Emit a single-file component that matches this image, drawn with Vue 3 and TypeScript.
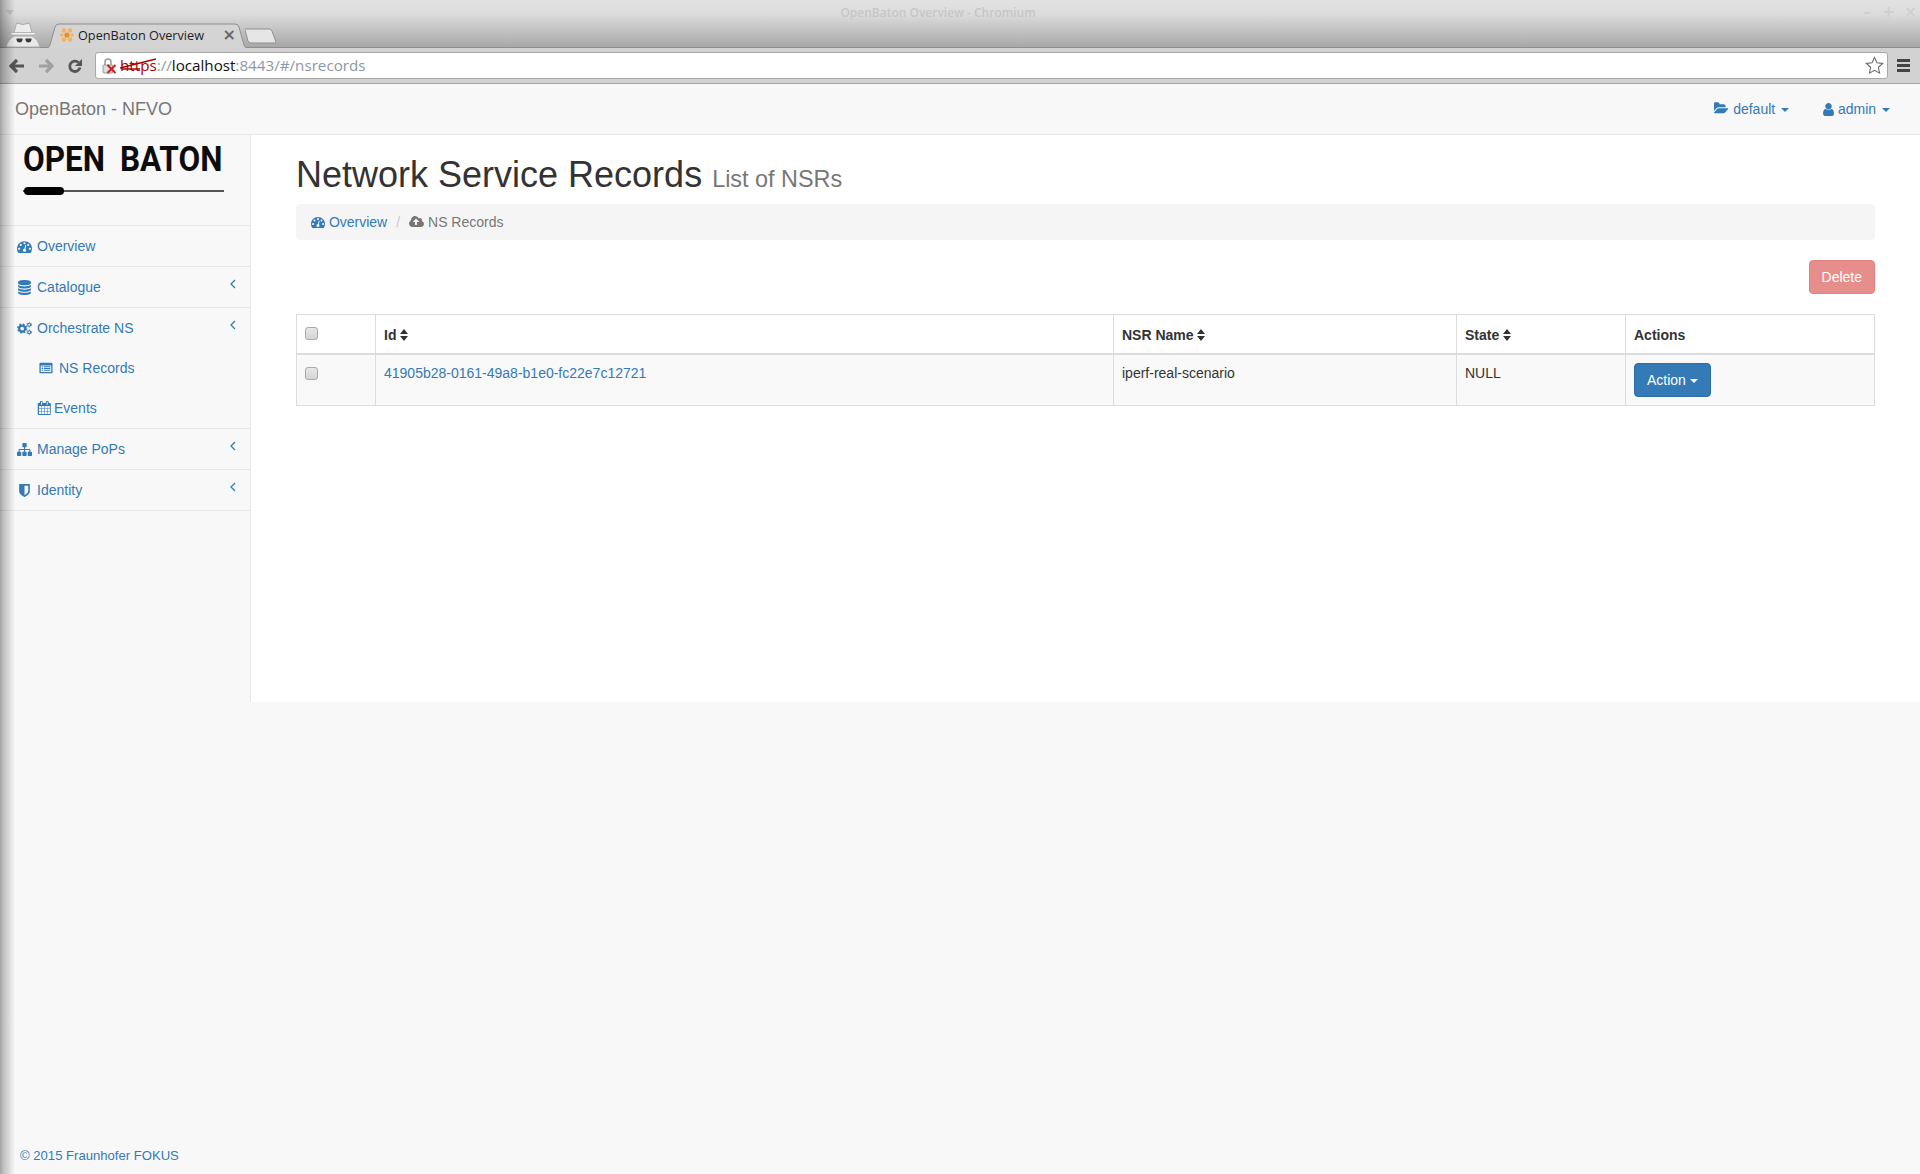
<script setup lang="ts">
interface Icon {
  box: string
  d: string
}

interface SubItem {
  label: string
  icon: 'list' | 'calendar'
}

interface NavItem {
  label: string
  icon: 'gauge' | 'database' | 'cogs' | 'sitemap' | 'shield'
  arrow: boolean
  children?: SubItem[]
}

const icons: Record<string, Icon> = {
  gauge: {
    box: '0 0 1792 1792',
    d: 'M384 1152q0-53-37.5-90.5t-90.5-37.5-90.5 37.5-37.5 90.5 37.5 90.5 90.5 37.5 90.5-37.5 37.5-90.5zm192-448q0-53-37.5-90.5t-90.5-37.5-90.5 37.5-37.5 90.5 37.5 90.5 90.5 37.5 90.5-37.5 37.5-90.5zm428 481l101-382q6-26-7.5-48.5t-38.5-29.5-48 6.5-30 39.5l-101 382q-60 5-107 43.5t-63 98.5q-20 77 20 146t117 89 146-20 89-117q16-60-6-117t-72-91zm660-33q0-53-37.5-90.5t-90.5-37.5-90.5 37.5-37.5 90.5 37.5 90.5 90.5 37.5 90.5-37.5 37.5-90.5zm-640-640q0-53-37.5-90.5t-90.5-37.5-90.5 37.5-37.5 90.5 37.5 90.5 90.5 37.5 90.5-37.5 37.5-90.5zm448 192q0-53-37.5-90.5t-90.5-37.5-90.5 37.5-37.5 90.5 37.5 90.5 90.5 37.5 90.5-37.5 37.5-90.5zm320 448q0 261-141 483-19 29-54 29h-1402q-35 0-54-29-141-221-141-483 0-182 71-348t191-286 286-191 348-71 348 71 286 191 191 286 71 348z'
  },
  database: {
    box: '0 0 1792 1792',
    d: 'M896 768q237 0 443-43t325-127v170q0 69-103 128t-280 93.5-385 34.5-385-34.5-280-93.5-103-128v-170q119 84 325 127t443 43zm0 768q237 0 443-43t325-127v170q0 69-103 128t-280 93.5-385 34.5-385-34.5-280-93.5-103-128v-170q119 84 325 127t443 43zm0-384q237 0 443-43t325-127v170q0 69-103 128t-280 93.5-385 34.5-385-34.5-280-93.5-103-128v-170q119 84 325 127t443 43zm0-1152q208 0 385 34.5t280 93.5 103 128v128q0 69-103 128t-280 93.5-385 34.5-385-34.5-280-93.5-103-128v-128q0-69 103-128t280-93.5 385-34.5z'
  },
  sitemap: {
    box: '0 0 1792 1792',
    d: 'M1792 1248v320q0 40-28 68t-68 28h-320q-40 0-68-28t-28-68v-320q0-40 28-68t68-28h96v-192h-512v192h96q40 0 68 28t28 68v320q0 40-28 68t-68 28h-320q-40 0-68-28t-28-68v-320q0-40 28-68t68-28h96v-192h-512v192h96q40 0 68 28t28 68v320q0 40-28 68t-68 28h-320q-40 0-68-28t-28-68v-320q0-40 28-68t68-28h96v-192q0-52 38-90t90-38h512v-192h-96q-40 0-68-28t-28-68v-320q0-40 28-68t68-28h320q40 0 68 28t28 68v320q0 40-28 68t-68 28h-96v192h512q52 0 90 38t38 90v192h96q40 0 68 28t28 68z'
  },
  shield: {
    box: '0 0 1792 1792',
    d: 'M1344 960v-640h-448v1137q119-63 213-137 235-184 235-360zm192-768v768q0 86-33.5 170.5t-83 150-118 127.5-126.5 103-121 77.5-89.5 49.5-42.5 20q-12 6-26 6t-26-6q-16-7-42.5-20t-89.5-49.5-121-77.5-126.5-103-118-127.5-83-150-33.5-170.5v-768q0-26 19-45t45-19h1152q26 0 45 19t19 45z'
  },
  calendar: {
    box: '0 0 1664 1792',
    d: 'M192 1664h288v-288h-288v288zm352 0h320v-288h-320v288zm-352-352h288v-320h-288v320zm352 0h320v-320h-320v320zm-352-384h288v-288h-288v288zm736 736h320v-288h-320v288zm-384-736h320v-288h-320v288zm768 736h288v-288h-288v288zm-384-352h320v-320h-320v320zm-352-864v-288q0-13-9.5-22.5t-22.5-9.5h-64q-13 0-22.5 9.5t-9.5 22.5v288q0 13 9.5 22.5t22.5 9.5h64q13 0 22.5-9.5t9.5-22.5zm736 864h288v-320h-288v320zm-384-384h320v-288h-320v288zm352 0h288v-288h-288v288zm32-480v-288q0-13-9.5-22.5t-22.5-9.5h-64q-13 0-22.5 9.5t-9.5 22.5v288q0 13 9.5 22.5t22.5 9.5h64q13 0 22.5-9.5t9.5-22.5zm384-64v1280q0 52-38 90t-90 38h-1408q-52 0-90-38t-38-90v-1280q0-52 38-90t90-38h128v-96q0-66 47-113t113-47h64q66 0 113 47t47 113v96h384v-96q0-66 47-113t113-47h64q66 0 113 47t47 113v96h128q52 0 90 38t38 90z'
  },
  cloud: {
    box: '0 0 1920 1792',
    d: 'M1280 864q0-14-9-23l-352-352q-9-9-23-9t-23 9l-351 351q-10 12-10 24 0 14 9 23t23 9h224v352q0 13 9.5 22.5t22.5 9.5h192q13 0 22.5-9.5t9.5-22.5v-352h224q13 0 22.5-9.5t9.5-22.5zm640 288q0 159-112.5 271.5t-271.5 112.5h-1088q-185 0-316.5-131.5t-131.5-316.5q0-130 70-240t188-165q-2-30-2-43 0-212 150-362t362-150q156 0 285.5 87t188.5 231q71-62 166-62 106 0 181 75t75 181q0 76-41 138 130 31 213.5 135.5t83.5 238.5z'
  },
  folder: {
    box: '0 100 1920 1792',
    d: 'M1815 952q0 31-31 66l-336 396q-43 51-120.5 86.5t-143.5 35.5h-1088q-34 0-60.5-13t-26.5-43q0-31 31-66l336-396q43-51 120.5-86.5t143.5-35.5h1088q34 0 60.5 13t26.5 43zm-343-344v160h-832q-94 0-197 47.5t-164 119.5l-337 396-5 6q0-4-.5-12.5t-.5-12.5v-960q0-92 66-158t158-66h320q92 0 158 66t66 158v32h544q92 0 158 66t66 158z'
  },
  user: {
    box: '256 128 1280 1536',
    d: 'M1536 1399q0 109-62.5 187t-150.5 78h-854q-88 0-150.5-78t-62.5-187q0-85 8.5-160.5t31.5-152 58.5-131 94-89 134.5-34.5q131 128 313 128t313-128q76 0 134.5 34.5t94 89 58.5 131 31.5 152 8.5 160.5zm-256-887q0 159-112.5 271.5t-271.5 112.5-271.5-112.5-112.5-271.5 112.5-271.5 271.5-112.5 271.5 112.5 112.5 271.5z'
  },
  list: {
    box: '0 0 16 14',
    d: 'M1.5 1h13q1 0 1 1v10q0 1-1 1h-13q-1 0-1-1v-10q0-1 1-1zM2 4v7.500h12v-7.500zM3 5h1.500v1h-1.500zM5.500 5h7.500v1h-7.500zM3 7h1.500v1h-1.500zM5.500 7h7.500v1h-7.500zM3 9h1.500v1h-1.500zM5.500 9h7.500v1h-7.500z'
  }
}

const nav: NavItem[] = [
  { label: 'Overview', icon: 'gauge', arrow: false },
  { label: 'Catalogue', icon: 'database', arrow: true },
  {
    label: 'Orchestrate NS',
    icon: 'cogs',
    arrow: true,
    children: [
      { label: 'NS Records', icon: 'list' },
      { label: 'Events', icon: 'calendar' }
    ]
  },
  { label: 'Manage PoPs', icon: 'sitemap', arrow: true },
  { label: 'Identity', icon: 'shield', arrow: true }
]

const columns = ['Id', 'NSR Name', 'State']
</script>

<template>
  <div class="page">
    <div class="edge-shadow"></div>

    <header class="browser">
      <div class="titlebar">
        <span class="win-menu"></span>
        <span class="win-title">OpenBaton Overview - Chromium</span>
        <div class="win-controls">
          <span>–</span>
          <span>+</span>
          <span>×</span>
        </div>
      </div>
      <div class="tabstrip">
        <svg class="incognito" viewBox="0 0 36 26">
          <path d="M11.500 1l6.500 1.500 6.500-1.500 2.500 9.500h-18z" fill="#ececec" stroke="#aaa" />
          <path d="M4 10.500h28l-3 2.500h-22z" fill="#f2f2f2" stroke="#aaa" stroke-width=".7" />
          <path d="M9 14h18q6 3 8 11h-34q2-8 8-11z" fill="#e8e8e8" stroke="#aaa" />
          <path d="M11.500 16.500h6v1.500q-.5 2.500-3 2.500t-3-2.500zM20.500 16.500h6v1.500q-.5 2.500-3 2.500t-3-2.500z" fill="#3c3c3c" />
        </svg>
        <div class="tab">
          <svg class="tab-shape" viewBox="0 0 203 25" preserveAspectRatio="none">
            <path d="M0 25h2q2 0 3-3l5-18q1-3 4-3h176q3 0 4 3l5 18q1 3 3 3h1" fill="#d4d4d4" stroke="#8e8e8e" />
          </svg>
          <svg class="favicon" viewBox="0 0 14 14">
            <g fill="#f5b061">
              <circle cx="4" cy="2.500" r="2.200" />
              <circle cx="10" cy="2.500" r="2.200" />
              <circle cx="1.800" cy="7" r="1.800" />
              <circle cx="12.200" cy="7" r="1.800" />
              <circle cx="4" cy="11.500" r="2.200" />
              <circle cx="10" cy="11.500" r="2.200" />
            </g>
            <circle cx="7" cy="7" r="2.600" fill="#f08c1a" />
          </svg>
          <span class="tab-title">OpenBaton Overview</span>
          <span class="tab-close">×</span>
        </div>
        <svg class="newtab" viewBox="0 0 32 16">
          <path d="M1 1h23q2 0 3 2l4 11q.5 1-1 1h-24q-2 0-3-2l-3-11q0-1 1-1z" fill="#e6e6e6" stroke="#8e8e8e" />
        </svg>
      </div>
      <div class="toolbar">
        <svg class="nav-btn" viewBox="0 0 16 16">
          <path d="M8 2l-6 6 6 6M2.500 8h12.500" fill="none" stroke="#555" stroke-width="3.200" />
        </svg>
        <svg class="nav-btn" viewBox="0 0 16 16">
          <path d="M8 2l6 6-6 6M13.500 8h-12.500" fill="none" stroke="#a0a0a0" stroke-width="3.200" />
        </svg>
        <svg class="nav-btn" viewBox="0 0 16 16">
          <path d="M13 9.500a5.200 5.200 0 1 1-1.500-5" fill="none" stroke="#555" stroke-width="2.800" />
          <path d="M15 1v7h-7z" fill="#555" />
        </svg>
        <div class="omnibox">
          <svg class="lock" viewBox="0 0 16 16">
            <path d="M4 7v-3q0-3 3-3t3 3v3" fill="none" stroke="#999" stroke-width="1.500" />
            <rect x="2" y="7" width="10" height="8" rx="1" fill="#ddd" stroke="#999" />
            <path d="M6.500 7l8 8M14.500 7l-8 8" stroke="#c8201c" stroke-width="2" />
          </svg>
          <span class="url">
            <span class="url-scheme">https<svg class="url-strike" viewBox="0 0 36 14"><path d="M0 11l36-9M2 12h18" stroke="#a80000" stroke-width="1.300" fill="none" /></svg></span><span class="url-muted">://</span><span class="url-host">localhost</span><span class="url-muted">:8443/#/nsrecords</span>
          </span>
          <svg class="star" viewBox="0 0 20 20">
            <path d="M10 1.500l2.600 5.600 6 .7-4.500 4.100 1.200 6.100-5.300-3-5.300 3 1.200-6.100-4.500-4.100 6-.7z" fill="#fff" stroke="#666" stroke-width="1.100" />
          </svg>
        </div>
        <div class="hamburger">
          <span></span>
          <span></span>
          <span></span>
        </div>
      </div>
    </header>

    <nav class="navbar">
      <a class="brand">OpenBaton - NFVO</a>
      <div class="nav-right">
        <a class="nav-link">
          <svg class="icon folder" :viewBox="icons.folder.box"><path :d="icons.folder.d" /></svg>
          default
          <span class="caret"></span>
        </a>
        <a class="nav-link">
          <svg class="icon user" :viewBox="icons.user.box"><path :d="icons.user.d" /></svg>
          admin
          <span class="caret"></span>
        </a>
      </div>
    </nav>

    <div class="workspace">
      <aside class="sidebar">
        <div class="logo">
          <div class="logo-text">OPEN BATON</div>
          <div class="logo-line"><span></span></div>
        </div>
        <ul class="menu">
          <li v-for="item in nav" :key="item.label" class="menu-item">
            <a class="menu-link">
              <svg v-if="item.icon === 'cogs'" class="menu-icon" viewBox="0 0 16 14">
                <g fill="none" stroke="#337ab7">
                  <circle cx="5.500" cy="7" r="3.200" stroke-width="2.400" />
                  <circle cx="5.500" cy="7" r="4.700" stroke-width="1.500" stroke-dasharray="2 1.700" />
                  <circle cx="13" cy="3" r="1.600" stroke-width="1.200" />
                  <circle cx="13" cy="3" r="2.500" stroke-width="1" stroke-dasharray="1.200 1.400" />
                  <circle cx="13" cy="11" r="1.600" stroke-width="1.200" />
                  <circle cx="13" cy="11" r="2.500" stroke-width="1" stroke-dasharray="1.200 1.400" />
                </g>
              </svg>
              <svg v-else class="menu-icon" :viewBox="icons[item.icon].box"><path :d="icons[item.icon].d" /></svg>
              <span>{{ item.label }}</span>
              <svg v-if="item.arrow" class="chevron" viewBox="0 0 6 10">
                <path d="M5 1l-4 4 4 4" fill="none" stroke="#337ab7" stroke-width="1.300" />
              </svg>
            </a>
            <ul v-if="item.children" class="submenu">
              <li v-for="child in item.children" :key="child.label">
                <a class="sub-link" :class="`sub-${child.icon}`">
                  <svg class="sub-icon" :viewBox="icons[child.icon].box"><path :d="icons[child.icon].d" /></svg>
                  <span>{{ child.label }}</span>
                </a>
              </li>
            </ul>
          </li>
        </ul>
      </aside>

      <main class="content">
        <h1 class="title">Network Service Records <small>List of NSRs</small></h1>
        <ol class="breadcrumb">
          <li>
            <a>
              <svg class="icon" :viewBox="icons.gauge.box"><path :d="icons.gauge.d" /></svg>
              Overview
            </a>
          </li>
          <li class="sep">/</li>
          <li class="crumb-active">
            <svg class="icon cloud" :viewBox="icons.cloud.box"><path :d="icons.cloud.d" /></svg>
            NS Records
          </li>
        </ol>

        <div class="actions">
          <button class="btn btn-danger" disabled>Delete</button>
        </div>

        <table class="records">
          <colgroup>
            <col style="width: 79px" />
            <col style="width: 738px" />
            <col style="width: 343px" />
            <col style="width: 169px" />
            <col />
          </colgroup>
          <thead>
            <tr>
              <th class="check-cell"><input type="checkbox" class="check" /></th>
              <th v-for="col in columns" :key="col">
                {{ col }}
                <svg class="sort" viewBox="0 0 8 12">
                  <path d="M4 0l4 5h-8zM4 12l-4-5h8z" />
                </svg>
              </th>
              <th>Actions</th>
            </tr>
          </thead>
          <tbody>
            <tr>
              <td><input type="checkbox" class="check" /></td>
              <td><a>41905b28-0161-49a8-b1e0-fc22e7c12721</a></td>
              <td>iperf-real-scenario</td>
              <td>NULL</td>
              <td>
                <button class="btn btn-primary">Action <span class="caret"></span></button>
              </td>
            </tr>
          </tbody>
        </table>
      </main>
    </div>

    <footer class="footer">© 2015 Fraunhofer FOKUS</footer>
  </div>
</template>

<style>
body {
  margin: 0;
  background: #f8f8f8;
}
</style>

<style scoped>
.page {
  position: relative;
  display: flex;
  flex-direction: column;
  height: 1174px;
  overflow: hidden;
  font-family: "Liberation Sans", Arial, sans-serif;
  font-size: 14px;
  line-height: 20px;
  color: #333;
  background: #f8f8f8;
}

.edge-shadow {
  position: absolute;
  top: 0;
  bottom: 0;
  left: 0;
  width: 15px;
  background: linear-gradient(to right, rgba(0, 0, 0, 0.34), rgba(0, 0, 0, 0.22) 25%, rgba(0, 0, 0, 0));
  pointer-events: none;
  z-index: 5;
}

a {
  color: #337ab7;
  text-decoration: none;
}

ul,
ol {
  margin: 0;
  padding: 0;
  list-style: none;
}

.icon {
  width: 14px;
  height: 14px;
  fill: currentColor;
  vertical-align: -2px;
}

.caret {
  display: inline-block;
  width: 0;
  height: 0;
  margin-left: 0;
  vertical-align: middle;
  border-top: 4px solid;
  border-right: 4px solid transparent;
  border-left: 4px solid transparent;
}

/* browser frame */
.browser {
  flex: none;
  height: 84px;
  background: linear-gradient(to bottom, #e2e2e2 0, #dcdcdc 14px, #a8a8a8 47px);
}

.titlebar {
  display: flex;
  align-items: center;
  justify-content: center;
  position: relative;
  height: 22px;
  padding: 3px 44px 0 0;
  box-sizing: border-box;
}

.win-menu {
  position: absolute;
  left: 6px;
  top: 10px;
  border-top: 5px solid #c4c4c4;
  border-left: 4px solid transparent;
  border-right: 4px solid transparent;
}

.win-title {
  font-family: "Open Sans", sans-serif;
  font-size: 12px;
  font-weight: 600;
  color: #c6c6c6;
}

.win-controls {
  position: absolute;
  right: 2px;
  top: 2px;
  display: flex;
  gap: 7px;
  font-family: "DejaVu Sans", sans-serif;
  font-size: 15px;
  font-weight: 700;
  color: #cfcfcf;
}

.win-controls span {
  width: 15px;
  text-align: center;
}

.tabstrip {
  display: flex;
  align-items: flex-end;
  height: 25px;
  padding-left: 5px;
  border-bottom: 1px solid #8e8e8e;
}

.incognito {
  width: 36px;
  height: 26px;
  margin-bottom: -1px;
}

.tab {
  position: relative;
  display: flex;
  align-items: center;
  width: 203px;
  height: 25px;
  margin-left: 4px;
  margin-bottom: -1px;
  padding: 0 0 1px 15px;
  box-sizing: border-box;
}

.tab-shape {
  position: absolute;
  inset: 0;
  width: 100%;
  height: 100%;
}

.favicon {
  position: relative;
  width: 14px;
  height: 14px;
}

.tab-title {
  position: relative;
  margin-left: 4px;
  font-family: "Open Sans", sans-serif;
  font-size: 12.700px;
  color: #222;
}

.tab-close {
  position: absolute;
  right: 12px;
  top: 2px;
  font-family: "DejaVu Sans", sans-serif;
  font-size: 16px;
  font-weight: 700;
  color: #666;
}

.newtab {
  width: 32px;
  height: 16px;
  margin-left: -3px;
  margin-bottom: 3px;
}

.toolbar {
  display: flex;
  align-items: center;
  height: 36px;
  padding-left: 9px;
  box-sizing: border-box;
  background: #d2d2d2;
  border-bottom: 1px solid #a5a5a5;
}

.nav-btn {
  width: 16px;
  height: 16px;
  margin-right: 13px;
}

.omnibox {
  position: relative;
  display: flex;
  align-items: center;
  width: 1793px;
  height: 27px;
  margin-left: -1px;
  padding-left: 5px;
  box-sizing: border-box;
  background: #fff;
  border: 1px solid #a8a8a8;
  border-radius: 3px;
}

.lock {
  width: 16px;
  height: 16px;
}

.url {
  margin: 0 0 2px 3px;
  font-family: "Open Sans", sans-serif;
  font-size: 15.200px;
  color: #8c98a4;
  white-space: nowrap;
}

.url-scheme {
  position: relative;
  color: #a80000;
}

.url-strike {
  position: absolute;
  left: 0;
  top: 2px;
  width: 36px;
  height: 14px;
}

.url-host {
  color: #111;
}

.star {
  position: absolute;
  right: 3px;
  top: 3px;
  width: 19px;
  height: 19px;
}

.hamburger {
  display: flex;
  flex-direction: column;
  gap: 2px;
  margin-left: 9px;
}

.hamburger span {
  width: 13px;
  height: 3px;
  background: #444;
}

/* app navbar */
.navbar {
  flex: none;
  display: flex;
  align-items: center;
  justify-content: space-between;
  height: 51px;
  padding: 0 30px 0 15px;
  box-sizing: border-box;
  background: #f8f8f8;
  border-bottom: 1px solid #e7e7e7;
}

.brand {
  font-size: 18px;
  color: #777;
}

.nav-right {
  display: flex;
  gap: 34px;
}

.nav-link .caret {
  margin-left: 2px;
}

.folder {
  width: 15px;
}

.user {
  width: 11px;
  height: 13px;
}

.cloud {
  width: 15px;
}

.workspace {
  flex: none;
  display: flex;
  height: 567px;
  background: #fff;
}

/* sidebar */
.sidebar {
  flex: none;
  width: 251px;
  box-sizing: border-box;
  background: #f8f8f8;
  border-right: 1px solid #e7e7e7;
}

.logo {
  height: 91px;
  padding: 5px 0 0 23px;
  box-sizing: border-box;
  border-bottom: 1px solid #e7e7e7;
}

.logo-text {
  font-family: Roboto, sans-serif;
  font-size: 35px;
  font-weight: 700;
  line-height: 40px;
  word-spacing: 8px;
  color: #0c0c0c;
  white-space: nowrap;
  transform: scaleX(0.9);
  transform-origin: left center;
}

.logo-line {
  position: relative;
  width: 201px;
  height: 2px;
  margin-top: 10px;
  background: #555;
}

.logo-line span {
  position: absolute;
  left: 1px;
  top: -3px;
  width: 40px;
  height: 8px;
  border-radius: 4px;
  background: #000;
}

.menu-item {
  border-bottom: 1px solid #e7e7e7;
}

.menu-link {
  position: relative;
  display: flex;
  align-items: center;
  height: 40px;
  padding-left: 17px;
}

.menu-icon {
  width: 15px;
  height: 15px;
  margin-right: 5px;
  fill: #337ab7;
}

.chevron {
  position: absolute;
  right: 14px;
  top: 12px;
  width: 6px;
  height: 10px;
}

.sub-link {
  display: flex;
  align-items: center;
  height: 40px;
}

.sub-list {
  padding-left: 39px;
}

.sub-calendar {
  padding-left: 37px;
}

.sub-icon {
  fill: #337ab7;
  width: 14px;
  height: 14px;
}

.sub-list .sub-icon {
  margin-right: 6px;
}

.sub-calendar .sub-icon {
  margin-right: 3px;
}

/* content */
.content {
  flex: 1;
  min-width: 0;
  padding: 0 45px;
}

.title {
  margin: 20px 0 4px;
  font-size: 36px;
  font-weight: 500;
  line-height: 39.600px;
  color: #333;
}

.title small {
  font-size: 23.400px;
  font-weight: 400;
  color: #777;
}

.breadcrumb {
  display: flex;
  height: 36px;
  padding: 8px 15px;
  box-sizing: border-box;
  background: #f5f5f5;
  border-radius: 4px;
}

.sep {
  padding: 0 9px;
  color: #ccc;
}

.crumb-active {
  color: #777;
}

.actions {
  display: flex;
  justify-content: flex-end;
  margin: 20px 0;
}

.btn {
  height: 34px;
  padding: 6px 12px;
  box-sizing: border-box;
  font-family: inherit;
  font-size: 14px;
  line-height: 20px;
  color: #fff;
  border: 1px solid transparent;
  border-radius: 4px;
}

.btn-danger {
  background: #d9534f;
  border-color: #d43f3a;
  opacity: 0.65;
}

.btn-primary {
  background: #337ab7;
  border-color: #2e6da4;
}

.records {
  width: 100%;
  table-layout: fixed;
  border-collapse: collapse;
  border: 1px solid #ddd;
}

.records th,
.records td {
  padding: 8px;
  text-align: left;
  vertical-align: top;
  border: 1px solid #ddd;
}

.records th {
  height: 22px;
  font-weight: 700;
  vertical-align: bottom;
  border-bottom-width: 2px;
}

.records th.check-cell {
  vertical-align: top;
}

.records tbody tr {
  background: #f9f9f9;
}

.check {
  appearance: none;
  display: block;
  width: 13px;
  height: 13px;
  margin: 4px 0 0;
  box-sizing: border-box;
  background: linear-gradient(to bottom, #e8e8e8, #d4d4d4);
  border: 1px solid #a9a9a9;
  border-radius: 3px;
}

.sort {
  width: 8px;
  height: 12px;
  fill: #333;
  vertical-align: -1px;
}

.footer {
  margin-top: auto;
  padding: 0 0 8px 20px;
  font-size: 13.100px;
  color: #337ab7;
}
</style>
